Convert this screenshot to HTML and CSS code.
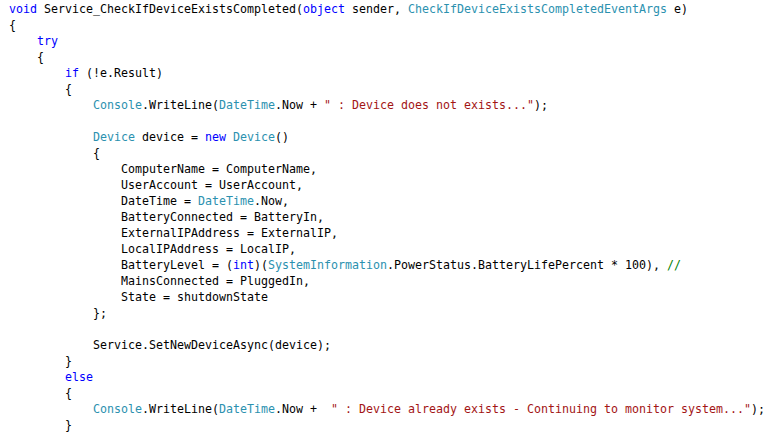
FILE: index.html
```html
<!DOCTYPE html>
<html>
<head>
	<title>Service_CheckIfDeviceExistsCompleted</title>
	<link rel="stylesheet" href="styles.css">
</head>
<body>
	<div class="code">
		<div class="line"><span class="kw">void</span> Service_CheckIfDeviceExistsCompleted(<span class="kw">object</span> sender, <span class="ty">CheckIfDeviceExistsCompletedEventArgs</span> e)</div>
		<div class="line">{</div>
		<div class="line i1"><span class="kw">try</span></div>
		<div class="line i1">{</div>
		<div class="line i2"><span class="kw">if</span> (!e.Result)</div>
		<div class="line i2">{</div>
		<div class="line i3"><span class="ty">Console</span>.WriteLine(<span class="ty">DateTime</span>.Now + <span class="st">" : Device does not exists..."</span>);</div>
		<div class="line"></div>
		<div class="line i3"><span class="ty">Device</span> device = <span class="kw">new</span> <span class="ty">Device</span>()</div>
		<div class="line i3">{</div>
		<div class="line i4">ComputerName = ComputerName,</div>
		<div class="line i4">UserAccount = UserAccount,</div>
		<div class="line i4">DateTime = <span class="ty">DateTime</span>.Now,</div>
		<div class="line i4">BatteryConnected = BatteryIn,</div>
		<div class="line i4">ExternalIPAddress = ExternalIP,</div>
		<div class="line i4">LocalIPAddress = LocalIP,</div>
		<div class="line i4">BatteryLevel = (<span class="kw">int</span>)(<span class="ty">SystemInformation</span>.PowerStatus.BatteryLifePercent * 100), <span class="cm">//</span></div>
		<div class="line i4">MainsConnected = PluggedIn,</div>
		<div class="line i4">State = shutdownState</div>
		<div class="line i3">};</div>
		<div class="line"></div>
		<div class="line i3">Service.SetNewDeviceAsync(device);</div>
		<div class="line i2">}</div>
		<div class="line i2"><span class="kw">else</span></div>
		<div class="line i2">{</div>
		<div class="line i3"><span class="ty">Console</span>.WriteLine(<span class="ty">DateTime</span>.Now +  <span class="st">" : Device already exists - Continuing to monitor system..."</span>);</div>
		<div class="line i2">}</div>
	</div>
</body>
</html>
```

FILE: styles.css
```css
body{
	margin: 0;
	background: white;
}
.code{
	padding: 1px 0 0 9px;
	font-family: "DejaVu Sans Mono", monospace;
	font-size: 11.63px;
	line-height: 16px;
	color: black;
}
.line{
	height: 16px;
	white-space: pre;
}
/* one indent level = 4 chars = 28px */
.i1{
	padding-left: 28px;
}
.i2{
	padding-left: 56px;
}
.i3{
	padding-left: 84px;
}
.i4{
	padding-left: 112px;
}
.kw{
	color: #0000ff;
}
.ty{
	color: #2b91af;
}
.st{
	color: #a31515;
}
.cm{
	color: #008000;
}
```
